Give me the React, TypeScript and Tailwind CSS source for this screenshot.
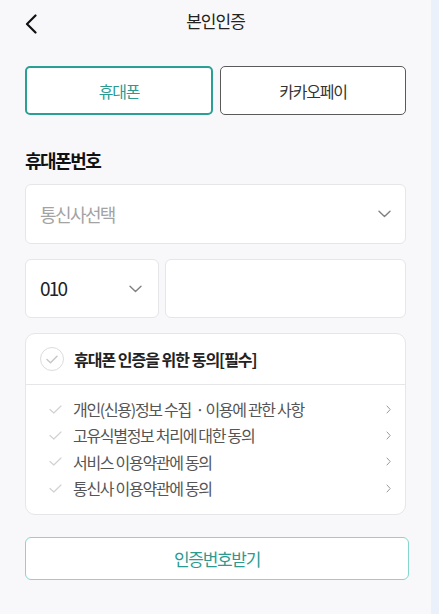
import React from "react";

const font = { fontFamily: '"Noto Sans CJK KR", "Noto Sans", sans-serif' };

function ChevronDown() {
  return (
    <svg width="13" height="8" viewBox="0 0 13 8" fill="none">
      <path d="M1 1.2L6.5 6.5L12 1.2" stroke="#808080" strokeWidth="1.4" strokeLinecap="round" strokeLinejoin="round" />
    </svg>
  );
}

function SmallCheck() {
  return (
    <svg width="13" height="9" viewBox="0 0 13 9" fill="none">
      <path d="M1 4.5L4.8 8L12 1" stroke="#d2d2d2" strokeWidth="1.2" strokeLinecap="round" strokeLinejoin="round" />
    </svg>
  );
}

function SmallChevronRight() {
  return (
    <svg width="5" height="9" viewBox="0 0 5 9" fill="none">
      <path d="M1 1L4.2 4.5L1 8" stroke="#9a9a9a" strokeWidth="1" strokeLinecap="round" strokeLinejoin="round" />
    </svg>
  );
}

const items = [
  "개인(신용)정보 수집  · 이용에 관한 사항",
  "고유식별정보 처리에 대한 동의",
  "서비스 이용약관에 동의",
  "통신사 이용약관에 동의",
];

export default function App() {
  return (
    <div className="flex w-[439px] h-[614px] overflow-hidden" style={font}>
      <div className="w-[431px] h-full bg-[#f8f8fa] px-[25px]">
        {/* header */}
        <div className="grid grid-cols-[1fr_auto_1fr] items-center h-[42px]">
          <div className="flex items-center pt-[6px]">
            <svg width="12" height="20" viewBox="0 0 12 20" fill="none">
              <path d="M10.5 1.5L2 10L10.5 18.5" stroke="#111" strokeWidth="2.2" strokeLinecap="round" strokeLinejoin="round" />
            </svg>
          </div>
          <div className="text-[17px] text-[#222] tracking-[-1px] leading-none pb-[2px]">본인인증</div>
          <div />
        </div>

        {/* tabs */}
        <div className="flex gap-[7px] mt-[24px]">
          <div className="flex-1 h-[49px] rounded-[5px] border-2 border-[#2b9e95] bg-white flex items-center justify-center text-[16px] text-[#2b9a91] tracking-[-1.2px]">
            휴대폰
          </div>
          <div className="flex-1 h-[49px] rounded-[5px] border-[1.5px] border-[#5a5a5a] bg-white flex items-center justify-center text-[16px] text-[#333] tracking-[-1.2px]">
            카카오페이
          </div>
        </div>

        {/* label */}
        <div className="mt-[33px] text-[18px] font-bold text-[#111] tracking-[-1.5px] leading-[24px]">휴대폰번호</div>

        {/* carrier select */}
        <div className="mt-[12px] h-[60px] rounded-[6px] border border-[#e6e6e9] bg-white flex items-center justify-between pl-[14px] pr-[14px]">
          <span className="text-[18px] text-[#a3a3a3] tracking-[-1.6px]">통신사선택</span>
          <ChevronDown />
        </div>

        {/* phone row */}
        <div className="mt-[15px] flex gap-[6px]">
          <div className="w-[134px] h-[59px] rounded-[6px] border border-[#e6e6e9] bg-white flex items-center justify-between pl-[14px] pr-[16px]">
            <span className="text-[19px] text-[#222] tracking-[-1.8px]">010</span>
            <ChevronDown />
          </div>
          <div className="flex-1 h-[59px] rounded-[6px] border border-[#e6e6e9] bg-white" />
        </div>

        {/* agreement card */}
        <div className="mt-[15px] rounded-[10px] border border-[#e6e6e9] bg-white">
          <div className="h-[51px] flex items-center pl-[14px] border-b border-[#e6e6e9]">
            <div className="w-[24px] h-[24px] rounded-full border-[1.5px] border-[#dcdcdc] flex items-center justify-center">
              <svg width="12" height="9" viewBox="0 0 12 9" fill="none">
                <path d="M1 4.5L4.5 7.8L11 1.2" stroke="#c8c8c8" strokeWidth="1.5" strokeLinecap="round" strokeLinejoin="round" />
              </svg>
            </div>
            <span className="ml-[10px] text-[16px] font-bold text-[#222] tracking-[-1px]">휴대폰 인증을 위한 동의[필수]</span>
          </div>
          <div className="pt-[11px] pb-[13px]">
            {items.map((t) => (
              <div key={t} className="h-[26.3px] flex items-center pl-[23px] pr-[14px]">
                <SmallCheck />
                <span className="ml-[11px] flex-1 text-[16px] text-[#555] tracking-[-1.3px] whitespace-pre">{t}</span>
                <SmallChevronRight />
              </div>
            ))}
          </div>
        </div>

        {/* submit */}
        <div className="mt-[22px] w-[384px] h-[43px] rounded-[6px] border-[1.5px] border-[#86d6cd] bg-white flex items-center justify-center text-[17px] text-[#2b9a91] tracking-[-1.3px]">
          인증번호받기
        </div>
      </div>
      <div className="w-[8px] h-full bg-[#ebf1fa]" />
    </div>
  );
}
